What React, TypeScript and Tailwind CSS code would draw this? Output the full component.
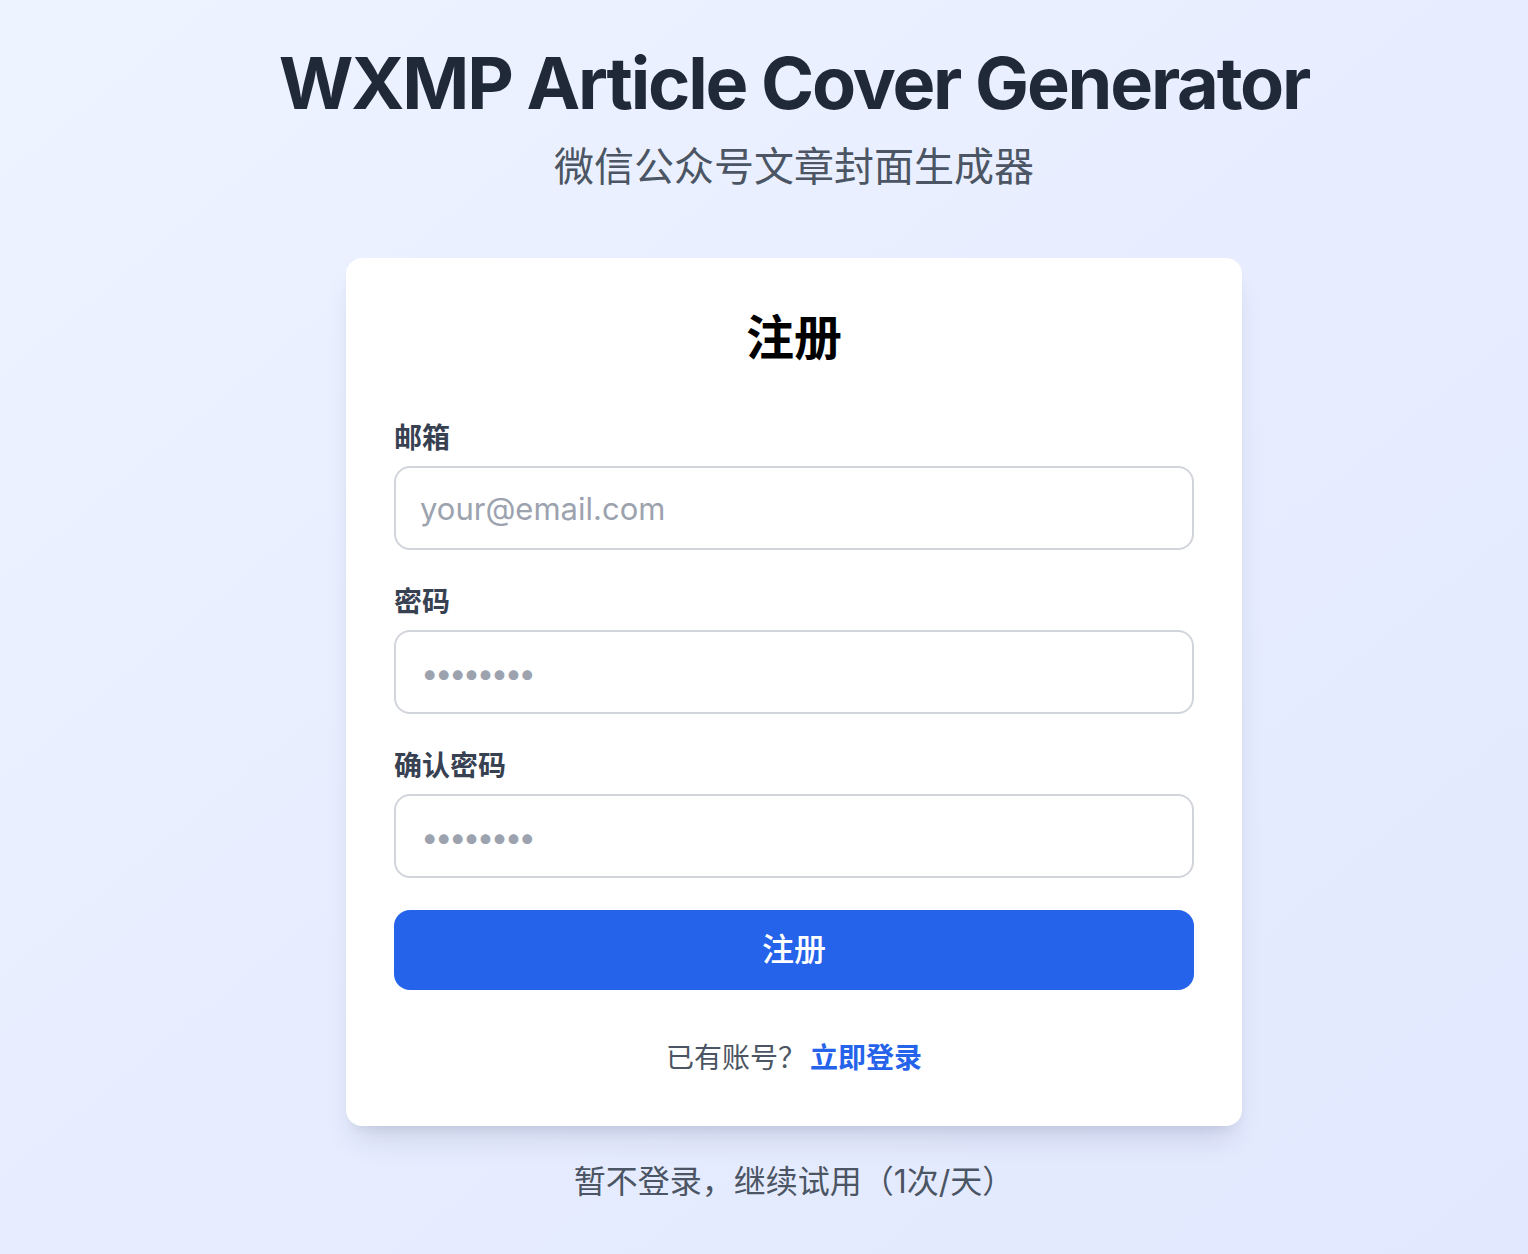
import React from "react";

const font = "font-['Inter','Noto_Sans_CJK_SC',sans-serif]";

interface FieldProps {
  label: string;
  type: string;
  placeholder: string;
}

const Field = ({ label, type, placeholder }: FieldProps) => (
  <div className="flex flex-col">
    <label className="mb-2 text-[28px] leading-[40px] font-semibold text-[#374151]">
      {label}
    </label>
    <input
      type={type}
      placeholder={placeholder}
      className={`h-[84px] w-full rounded-[16px] border-2 border-[#d1d5db] bg-white text-[31px] text-gray-800 outline-none placeholder:text-[#9ca3af] ${
        type === "password" ? "pl-[25px] placeholder:tracking-[-3.5px]" : "pl-6"
      }`}
    />
  </div>
);

export default function App() {
  return (
    <div
      className={`${font} min-h-[1254px] w-full bg-gradient-to-br from-[#edf3ff] to-[#e2e8fe] flex flex-col items-center pt-[43px] pl-[60px]`}
    >
      <h1 className="text-[72px] leading-[80px] font-bold tracking-[-2.2px] text-[#1f2937]">
        WXMP Article Cover Generator
      </h1>
      <p className="mt-4 text-[40px] leading-[56px] text-[#4b5563]">
        微信公众号文章封面生成器
      </p>

      <div className="mt-[63px] w-[896px] rounded-[16px] bg-white p-12 shadow-[0_20px_30px_-10px_rgba(30,41,80,0.15),0_8px_12px_-6px_rgba(30,41,80,0.08)]">
        <h2 className="mb-[48px] text-center text-[48px] leading-[64px] font-bold text-black">
          注册
        </h2>
        <form className="flex flex-col gap-8" onSubmit={(e) => e.preventDefault()}>
          <Field label="邮箱" type="email" placeholder="your@email.com" />
          <Field label="密码" type="password" placeholder="••••••••" />
          <Field label="确认密码" type="password" placeholder="••••••••" />
          <button
            type="submit"
            className="h-[80px] w-full rounded-[16px] bg-[#2563eb] text-[32px] font-medium text-white"
          >
            注册
          </button>
        </form>
        <p className="mt-12 text-center text-[28px] leading-[40px] text-[#4b5563]">
          已有账号？
          <a href="#" className="ml-1 font-semibold text-[#2563eb]">
            立即登录
          </a>
        </p>
      </div>

      <p className="mt-8 text-[32px] leading-[48px] text-[#4b5563]">
        暂不登录，继续试用（1次/天）
      </p>
    </div>
  );
}
